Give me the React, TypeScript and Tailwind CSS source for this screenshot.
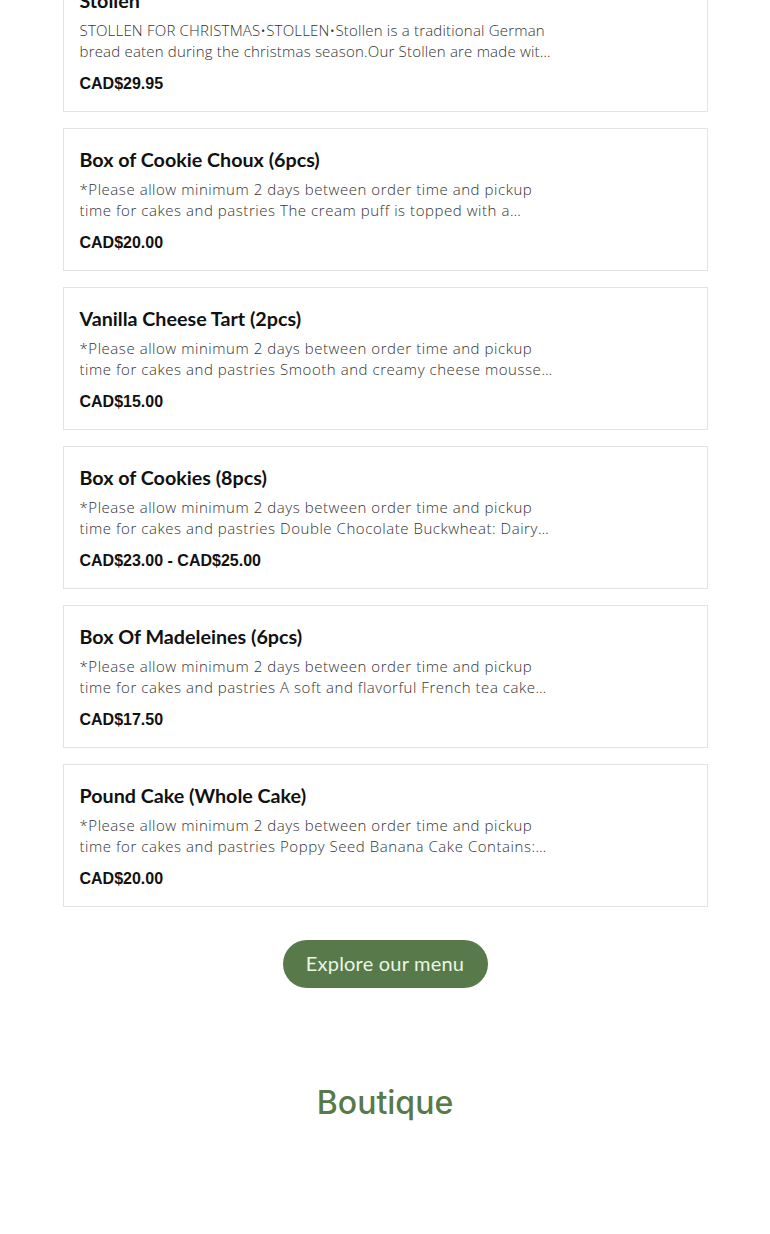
import React from "react";

type Item = {
  title: string;
  description: string;
  price: string;
  tight?: boolean;
};

const items: Item[] = [
  {
    title: "Stollen",
    description:
      "STOLLEN FOR CHRISTMAS•STOLLEN•Stollen is a traditional German bread eaten during the christmas season.Our Stollen are made with butter, dried fruits and nuts",
    price: "CAD$29.95",
    tight: true,
  },
  {
    title: "Box of Cookie Choux (6pcs)",
    description:
      "*Please allow minimum 2 days between order time and pickup time for cakes and pastries The cream puff is topped with a sweet cookie crust and filled with cream",
    price: "CAD$20.00",
  },
  {
    title: "Vanilla Cheese Tart (2pcs)",
    description:
      "*Please allow minimum 2 days between order time and pickup time for cakes and pastries Smooth and creamy cheese mousse in a buttery tart shell",
    price: "CAD$15.00",
  },
  {
    title: "Box of Cookies (8pcs)",
    description:
      "*Please allow minimum 2 days between order time and pickup time for cakes and pastries Double Chocolate Buckwheat: Dairy free and gluten free",
    price: "CAD$23.00 - CAD$25.00",
  },
  {
    title: "Box Of Madeleines (6pcs)",
    description:
      "*Please allow minimum 2 days between order time and pickup time for cakes and pastries A soft and flavorful French tea cake baked in shell moulds",
    price: "CAD$17.50",
  },
  {
    title: "Pound Cake (Whole Cake)",
    description:
      "*Please allow minimum 2 days between order time and pickup time for cakes and pastries Poppy Seed Banana Cake Contains: wheat, eggs, dairy",
    price: "CAD$20.00",
  },
];

function MenuCard({ item }: { item: Item }) {
  return (
    <div className="h-[143px] border border-[#e3e3e3] bg-white px-4 pt-[18px]">
      <h3 className="font-['Lato',sans-serif] text-[19.7px] leading-[26px] font-bold text-[#111]">
        {item.title}
      </h3>
      <p
        className={`mt-[6px] line-clamp-2 max-w-[476px] font-['Open_Sans',sans-serif] text-[15px] leading-[21px] font-light text-[#333] ${
          item.tight ? "tracking-[0.2px]" : "tracking-[0.55px]"
        }`}
      >
        {item.description}
      </p>
      <p className="mt-[12px] font-['Liberation_Sans',Arial,sans-serif] text-[16px] leading-[20px] font-bold text-[#111]">
        {item.price}
      </p>
    </div>
  );
}

export default function App() {
  return (
    <div className="min-h-[1234px] overflow-hidden bg-white">
      <div className="mx-auto mt-[-31px] flex w-[645px] flex-col gap-4">
        {items.map((item) => (
          <MenuCard key={item.title} item={item} />
        ))}
      </div>

      <div className="mt-[33px] flex justify-center">
        <button className="h-12 w-[205px] rounded-full bg-[#587a4b] pb-[2px] font-['Lato',sans-serif] text-[20px] tracking-[0.2px] text-[#eaf5e4]">
          Explore our menu
        </button>
      </div>

      <h2 className="mt-[95px] text-center font-['Inter',sans-serif] text-[32px] leading-[40px] font-medium text-[#587a4b]">
        Boutique
      </h2>
    </div>
  );
}
